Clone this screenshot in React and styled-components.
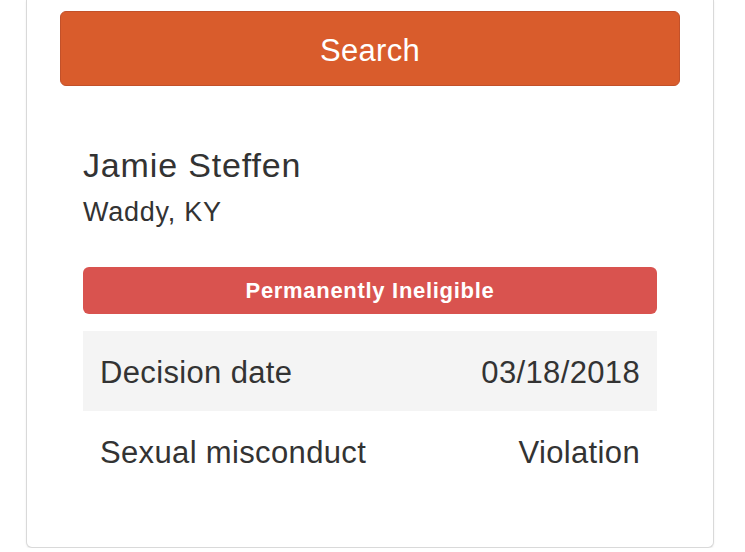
import React from 'react';
import styled, { createGlobalStyle } from 'styled-components';

const GlobalStyle = createGlobalStyle`
  html, body {
    margin: 0;
    padding: 0;
    background: #ffffff;
  }
  body {
    font-family: 'Liberation Sans', Arial, Helvetica, sans-serif;
    color: #333333;
  }
`;

const Card = styled.div`
  box-sizing: border-box;
  width: 688px;
  margin-left: 26px;
  padding: 11px 0 56px;
  border: 1px solid #d9d9d9;
  border-top: none;
  border-radius: 0 0 6px 6px;
  box-shadow: 0 1px 2px rgba(0, 0, 0, 0.08);
  background: #ffffff;
`;

const SearchSection = styled.div`
  padding: 0 33px;
`;

const SearchButton = styled.button`
  display: flex;
  align-items: center;
  justify-content: center;
  box-sizing: border-box;
  width: 100%;
  height: 75px;
  margin: 0;
  padding: 4px 0 0;
  border: 1px solid #c2512a;
  border-radius: 6px;
  background: #d95c2c;
  color: #ffffff;
  font-family: 'Liberation Sans', Arial, sans-serif;
  font-size: 31px;
  letter-spacing: 0.3px;
  cursor: pointer;
`;

const Result = styled.div`
  padding: 0 56px;
  margin-top: 59px;
`;

const Name = styled.div`
  font-size: 34px;
  line-height: 40px;
  letter-spacing: 0.85px;
  color: #333333;
`;

const Location = styled.div`
  margin-top: 11px;
  font-size: 27px;
  line-height: 32px;
  letter-spacing: 0.75px;
  color: #333333;
`;

const Badge = styled.div`
  display: flex;
  align-items: center;
  justify-content: center;
  height: 47px;
  margin-top: 39px;
  border-radius: 6px;
  background: ${p => p.$color};
  color: #ffffff;
  font-size: 22px;
  font-weight: bold;
  letter-spacing: 0.7px;
`;

const Table = styled.div`
  margin-top: 17px;
`;

const Row = styled.div`
  display: flex;
  align-items: center;
  justify-content: space-between;
  box-sizing: border-box;
  height: 80px;
  padding: 2px 17px 0;
  background: ${p => (p.$striped ? '#f4f4f4' : 'transparent')};
  font-size: 31px;
  line-height: 31px;
  letter-spacing: 0.35px;
  color: #333333;
`;

const rows = [
  ['Decision date', '03/18/2018'],
  ['Sexual misconduct', 'Violation'],
];

export default function App() {
  return (
    <>
      <GlobalStyle />
      <Card>
        <SearchSection>
          <SearchButton>Search</SearchButton>
        </SearchSection>
        <Result>
          <Name>Jamie Steffen</Name>
          <Location>Waddy, KY</Location>
          <Badge $color="#d9534f">Permanently Ineligible</Badge>
          <Table>
            {rows.map(([label, value], i) => (
              <Row key={label} $striped={i % 2 === 0}>
                <span>{label}</span>
                <span>{value}</span>
              </Row>
            ))}
          </Table>
        </Result>
      </Card>
    </>
  );
}
